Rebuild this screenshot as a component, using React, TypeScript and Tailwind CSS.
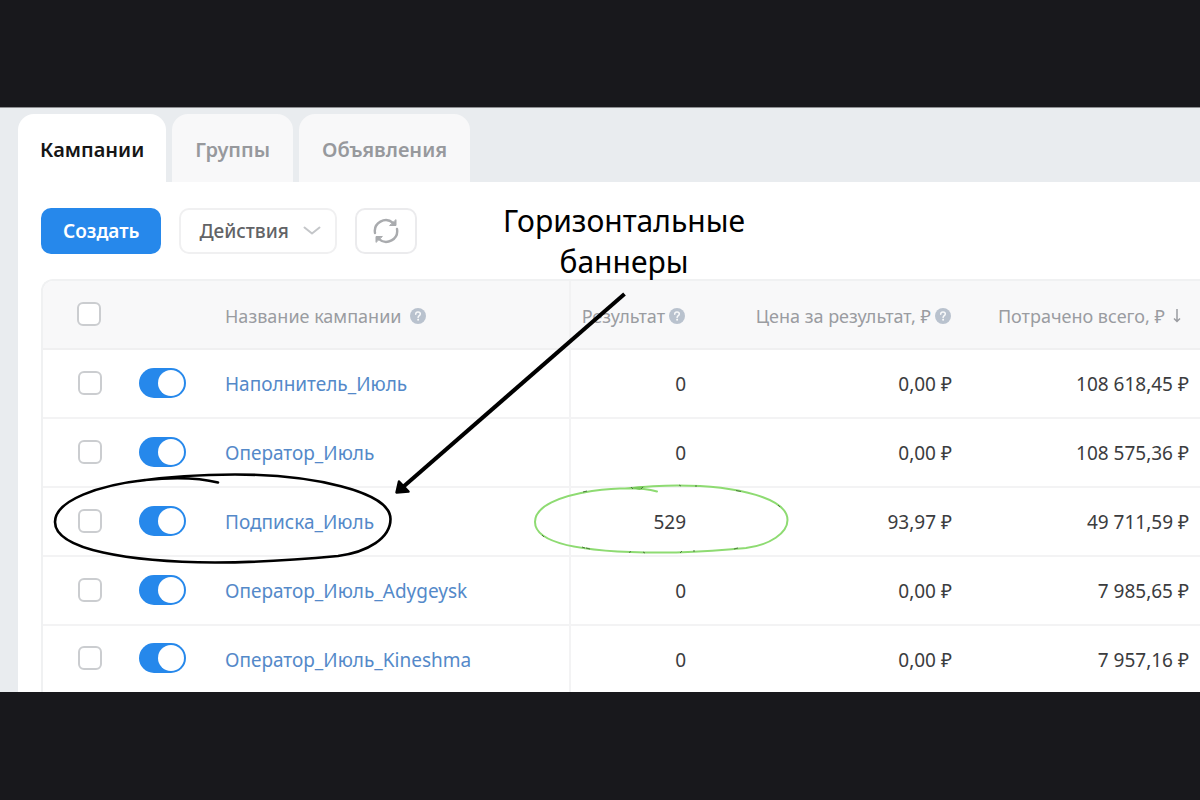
import { useState } from 'react';

type Campaign = {
    name: string;
    result: string;
    price: string;
    spent: string;
};

const campaigns: Campaign[] = [
    { name: 'Наполнитель_Июль', result: '0', price: '0,00 ₽', spent: '108 618,45 ₽' },
    { name: 'Оператор_Июль', result: '0', price: '0,00 ₽', spent: '108 575,36 ₽' },
    { name: 'Подписка_Июль', result: '529', price: '93,97 ₽', spent: '49 711,59 ₽' },
    { name: 'Оператор_Июль_Adygeysk', result: '0', price: '0,00 ₽', spent: '7 985,65 ₽' },
    { name: 'Оператор_Июль_Kineshma', result: '0', price: '0,00 ₽', spent: '7 957,16 ₽' }
];

const tabs = ['Кампании', 'Группы', 'Объявления'];

function HelpIcon() {
    return (
        <svg viewBox="0 0 16 16" className="inline-block size-4 shrink-0" aria-hidden="true">
            <circle cx="8" cy="8" r="8" fill="#b9c2ce" />
            <path
                d="M5.7 6.2C5.7 4.8 6.7 4 8 4s2.3.8 2.3 2c0 1.6-2.2 1.7-2.2 3.4"
                fill="none"
                stroke="#f8f9fa"
                strokeWidth="1.5"
                strokeLinecap="round"
            />
            <circle cx="8.1" cy="11.8" r="1" fill="#f8f9fa" />
        </svg>
    );
}

function Checkbox({ label }: { label: string }) {
    return (
        <input
            type="checkbox"
            aria-label={label}
            className="block size-6 appearance-none rounded-md border-2 border-[#cbcdd0] bg-white checked:bg-[#2688eb]"
        />
    );
}

function Toggle({ label }: { label: string }) {
    const [on, setOn] = useState(true);

    return (
        <button
            type="button"
            role="switch"
            aria-checked={on}
            aria-label={label}
            onClick={() => setOn(!on)}
            className={
                on
                    ? 'flex h-[30px] w-[47px] items-center justify-end rounded-full bg-[#2688eb] p-[2px]'
                    : 'flex h-[30px] w-[47px] items-center justify-start rounded-full bg-[#cbcdd0] p-[2px]'
            }
        >
            <span className="size-[26px] rounded-full bg-white" />
        </button>
    );
}

function Annotations() {
    return (
        <div className="pointer-events-none absolute inset-0 overflow-hidden">
            <p className="absolute top-[92px] left-[484px] w-[280px] text-center text-[30px] leading-[41px] text-black">
                Горизонтальные баннеры
            </p>
            <svg viewBox="0 108 1200 584" className="absolute top-0 left-0 h-[584px] w-[1200px]" fill="none" aria-hidden="true">
                {/* Arrow */}
                <path d="M624.5 294 L403 487" stroke="#000" strokeWidth="4" />
                <path d="M396.5 492.5 L399 481.5 L408.5 491.5 Z" fill="#000" stroke="#000" strokeWidth="2.5" strokeLinejoin="round" />

                {/* Row highlight */}
                <path
                    d="M218 482.5 C200 478 175 477 145 480 C100 485 55 500 55 522 C55 550 130 562 215 562.5 C260 562.5 300 559.5 338 556 C368 552 390.5 538 390.5 519 C390.5 491 310 474.5 235 474.5 C200 474.5 165 477 138 481"
                    stroke="#000"
                    strokeWidth="2.6"
                    strokeLinecap="round"
                />

                {/* Result highlight */}
                <path
                    d="M657 491.5 C640 487 615 488 592 491 C560 496 535 506 535 522 C535 545 590 552.5 660 552.5 C700 552.5 725 549.5 746 548 C770 545 787.5 533 787.5 520 C787.5 499 740 485.5 677 485.5 C655 485.5 640 487 625 488.5"
                    stroke="#8edb72"
                    strokeWidth="2"
                    strokeLinecap="round"
                />
                <path d="M629 487.5 L645 486 L640 490 Z" fill="#79c95d" />
                <path
                    d="M583 492 l4 -1 M631 487 l2 2 M641 489 l2 -2 M679 485 l2 1 M695 486 l2 0 M736 490.5 l5 1 M778 505 l2 2 M542 535 l2 2 M582 547 l3 1 M586 548 l4 1 M629 552.5 l2 -1 M643 552 l2 1 M680 553 l2 -2 M693 551 l2 0 M734 549 l4 -1"
                    stroke="#4c7a3c"
                    strokeWidth="1"
                />
            </svg>
        </div>
    );
}

function App() {
    const [activeTab, setActiveTab] = useState('Кампании');

    return (
        <div className="flex min-h-screen flex-col overflow-x-hidden bg-[#18181c] pt-[107px] font-['Noto_Sans','Open_Sans',sans-serif]">
            <main className="relative border-t border-[#8e8f92] bg-[#e9ecef] pl-[18px]">
                <div role="tablist" className="flex gap-[6px] pt-[6px]">
                    {tabs.map((tab) => (
                        <button
                            key={tab}
                            type="button"
                            role="tab"
                            aria-selected={tab === activeTab}
                            onClick={() => setActiveTab(tab)}
                            className={
                                tab === activeTab
                                    ? 'h-[68px] rounded-t-2xl bg-white px-[22px] pt-1 text-xl font-semibold text-[#151515]'
                                    : 'h-[68px] rounded-t-2xl bg-[#f8f8f9] px-[23px] pt-1 text-xl font-semibold text-[#97999d]'
                            }
                        >
                            {tab}
                        </button>
                    ))}
                </div>

                <div className="bg-white pt-[26px] pl-[23px]">
                    <div className="flex items-center gap-[18px] pb-[25px]">
                        <button type="button" className="h-[46px] rounded-[10px] bg-[#2688eb] px-[22px] text-[19px] font-semibold text-white">
                            Создать
                        </button>
                        <button
                            type="button"
                            className="flex h-[46px] items-center gap-[14px] rounded-[10px] border-2 border-[#f0f0f1] bg-white pr-[14px] pl-[18px] text-[19px] font-medium text-[#626366]"
                        >
                            Действия
                            <svg viewBox="0 0 18 10" className="h-[10px] w-[18px]" fill="none" stroke="#c4c6c9" strokeWidth="2" strokeLinecap="round" strokeLinejoin="round" aria-hidden="true">
                                <path d="M1.5 1.5 L9 7.5 L16.5 1.5" />
                            </svg>
                        </button>
                        <button
                            type="button"
                            aria-label="Обновить"
                            className="flex h-[46px] w-[62px] items-center justify-center rounded-[10px] border-2 border-[#ebebed] bg-white"
                        >
                            <svg viewBox="0 0 26 26" className="size-[26px]" fill="none" stroke="#a9abae" strokeWidth="2.4" strokeLinecap="round" strokeLinejoin="round" aria-hidden="true">
                                <path d="M2 15 A11 11 0 0 1 20 4.8" />
                                <path d="M23 2 V7.5 H17 Z" fill="#a9abae" strokeWidth="1" />
                                <path d="M24 11 A11 11 0 0 1 6 21.2" />
                                <path d="M3 24 V18.5 H9 Z" fill="#a9abae" strokeWidth="1" />
                            </svg>
                        </button>
                    </div>

                    <div className="overflow-hidden rounded-tl-xl border-t-2 border-l-2 border-[#f0f1f2]">
                        <table className="w-full table-fixed border-collapse text-[19px]">
                            <colgroup>
                                <col className="w-[96px]" />
                                <col className="w-[86px]" />
                                <col />
                                <col className="w-[130px]" />
                                <col className="w-[266px]" />
                                <col className="w-[234px]" />
                            </colgroup>
                            <thead>
                                <tr className="h-[68px] border-b-2 border-[#f0f0f1] bg-[#f8f8f9] text-lg text-[#9a9ca1]">
                                    <th className="pb-[2px] pl-[34px]">
                                        <Checkbox label="Выбрать все кампании" />
                                    </th>
                                    <th />
                                    <th className="border-r-2 border-[#f2f2f3] pt-[2px] text-left font-normal whitespace-nowrap">
                                        <span className="flex items-center gap-2">
                                            Название кампании
                                            <HelpIcon />
                                        </span>
                                    </th>
                                    <th className="pt-[2px] pr-[15px] font-normal whitespace-nowrap">
                                        <span className="flex items-center justify-end gap-1">
                                            Результат
                                            <HelpIcon />
                                        </span>
                                    </th>
                                    <th className="pt-[2px] pr-[15px] font-normal whitespace-nowrap">
                                        <span className="flex items-center justify-end gap-1">
                                            Цена за результат, ₽
                                            <HelpIcon />
                                        </span>
                                    </th>
                                    <th className="pt-[2px] pr-[19px] font-normal whitespace-nowrap">
                                        <span className="flex items-center justify-end gap-2">
                                            Потрачено всего, ₽
                                            <svg viewBox="0 0 8 14" className="h-[14px] w-2" fill="none" stroke="#9a9ca1" strokeWidth="1.5" aria-hidden="true">
                                                <path d="M4 0 V12 M1 9.5 L4 12.5 L7 9.5" />
                                            </svg>
                                        </span>
                                    </th>
                                </tr>
                            </thead>
                            <tbody>
                                {campaigns.map((campaign) => (
                                    <tr key={campaign.name} className="h-[69px] border-b-2 border-[#f3f3f4] text-right text-[#3b3c3e] last:h-[67px] last:border-b-0">
                                        <td className="pb-[2px] pl-[35px]">
                                            <Checkbox label={`Выбрать ${campaign.name}`} />
                                        </td>
                                        <td className="pb-[2px]">
                                            <Toggle label={`Включить ${campaign.name}`} />
                                        </td>
                                        <td className="border-r-2 border-[#f3f3f4] pt-[2px] text-left">
                                            <a href="#" className="text-[#5489c9]">
                                                {campaign.name}
                                            </a>
                                        </td>
                                        <td className="pt-[2px] pr-[14px]">{campaign.result}</td>
                                        <td className="pt-[2px] pr-[14px]">{campaign.price}</td>
                                        <td className="pt-[2px] pr-[11px]">{campaign.spent}</td>
                                    </tr>
                                ))}
                            </tbody>
                        </table>
                    </div>
                </div>

                <Annotations />
            </main>
        </div>
    );
}

export default App;
